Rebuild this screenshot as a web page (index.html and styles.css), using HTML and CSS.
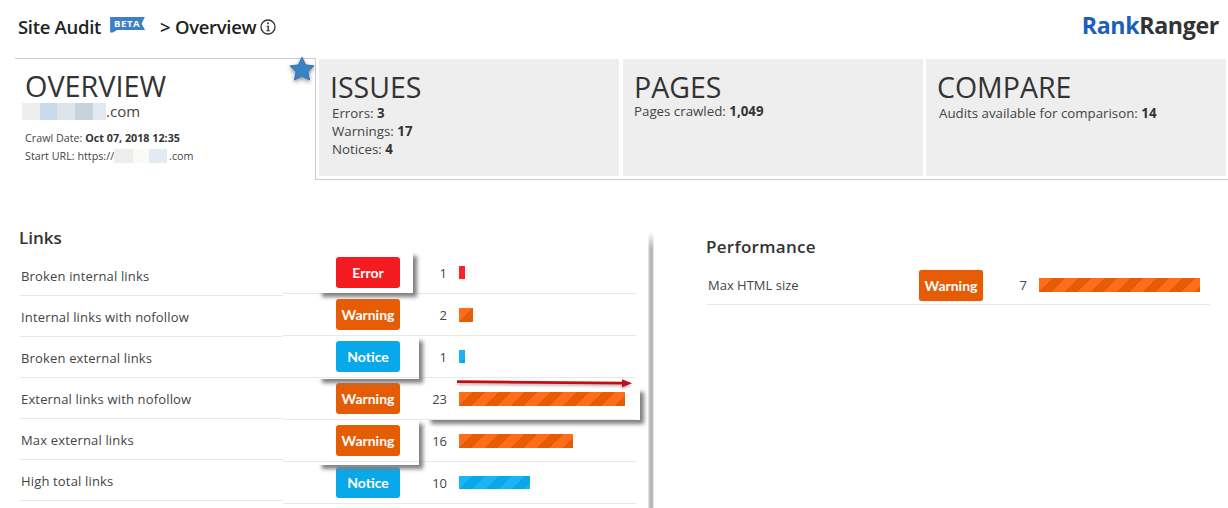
FILE: index.html
```html
<!DOCTYPE html>
<html lang="en">
<head>
<meta charset="utf-8">
<title>Site Audit Overview</title>
<link rel="stylesheet" href="styles.css">
</head>
<body>
<div class="page">
  <header class="top">
    <div class="crumb">
      <span class="crumb-main">Site Audit</span>
      <span class="beta">BETA</span>
      <span class="crumb-sub">&gt; Overview</span>
      <svg class="info" viewBox="0 0 16 16" width="16" height="16"><circle cx="8" cy="8" r="7" fill="none" stroke="#333" stroke-width="1.3"/><rect x="7.2" y="3.4" width="1.7" height="1.8" fill="#333"/><path d="M6.5 6.7h2.4v4.6h1v1H6.4v-1h1.1V7.7h-1z" fill="#333"/></svg>
    </div>
    <div class="logo"><span class="logo-blue">Rank</span>Ranger</div>
  </header>

  <section class="summary">
    <div class="tab">
      <svg class="star" viewBox="0 0 26 26" width="26" height="26"><path d="M13 1.2l3.6 7.7 8.4 1-6.2 5.7 1.7 8.3L13 20l-7.5 3.9 1.7-8.3L1 9.9l8.4-1z" fill="#3b82c4" stroke="#3674b0" stroke-width="1"/></svg>
      <h1 class="tab-title">OVERVIEW</h1>
      <div class="domain"><span class="blur blur-a"></span><span class="blur blur-b"></span><span class="blur blur-c"></span><span class="blur blur-d"></span><span class="blur blur-e"></span>.com</div>
      <p class="meta meta-date">Crawl Date: <b>Oct 07, 2018 12:35</b></p>
      <p class="meta">Start URL: https://<span class="blur blur-f"></span><span class="blur blur-g"></span><span class="blur blur-h"></span>.com</p>
    </div>
    <div class="cards">
      <div class="card">
        <h2 class="card-title">ISSUES</h2>
        <p class="stat">Errors: <b>3</b></p>
        <p class="stat">Warnings: <b>17</b></p>
        <p class="stat">Notices: <b>4</b></p>
      </div>
      <div class="card card-pages">
        <h2 class="card-title">PAGES</h2>
        <p class="stat">Pages crawled: <b>1,049</b></p>
      </div>
      <div class="card card-compare">
        <h2 class="card-title">COMPARE</h2>
        <p class="stat">Audits available for comparison: <b>14</b></p>
      </div>
    </div>
  </section>

  <main class="panels">
    <section class="links">
      <div class="link-labels">
        <h3 class="section-title">Links</h3>
        <div class="label-row">Broken internal links</div>
        <div class="label-row">Internal links with nofollow</div>
        <div class="label-row">Broken external links</div>
        <div class="label-row">External links with nofollow</div>
        <div class="label-row">Max external links</div>
        <div class="label-row">High total links</div>
      </div>
      <div class="link-values">
        <div class="value-row"><span class="badge error">Error</span><span class="count">1</span><span class="bar bar-error" style="width:6px"></span></div>
        <div class="value-row"><span class="badge warning">Warning</span><span class="count">2</span><span class="bar bar-warning" style="width:14px"></span></div>
        <div class="value-row"><span class="badge notice">Notice</span><span class="count">1</span><span class="bar bar-notice" style="width:6px"></span></div>
        <div class="value-row"><span class="badge warning">Warning</span><span class="count">23</span><span class="bar bar-warning" style="width:166px"></span></div>
        <div class="value-row"><span class="badge warning">Warning</span><span class="count">16</span><span class="bar bar-warning" style="width:114px"></span></div>
        <div class="value-row"><span class="badge notice">Notice</span><span class="count">10</span><span class="bar bar-notice" style="width:71px"></span></div>
      </div>
      <div class="mark mark-error"></div>
      <div class="mark mark-notice"></div>
      <div class="mark mark-max"></div>
      <div class="mark mark-bar"></div>
      <svg class="arrow" viewBox="0 0 176 10" width="176" height="10"><path d="M0 1.2 L165 2.8 L165 0.2 L175 4.2 L165 8.2 L165 5.6 L0 4z" fill="#c40d14"/></svg>
    </section>

    <section class="performance">
      <h3 class="section-title">Performance</h3>
      <div class="perf-row">
        <span class="perf-label">Max HTML size</span>
        <span class="badge warning badge-outline">Warning</span>
        <span class="count perf-count">7</span>
        <span class="bar bar-warning" style="width:161px"></span>
      </div>
    </section>
  </main>
</div>
</body>
</html>
```

FILE: styles.css
```css
* { box-sizing: border-box; }
html, body { margin: 0; padding: 0; background: #fff; }
.page {
  width: 1228px;
  height: 508px;
  overflow: hidden;
  font-family: "Open Sans", "Liberation Sans", sans-serif;
  color: #333;
}
p, h1, h2, h3 { margin: 0; font-weight: 400; }

/* header */
.top {
  height: 58px;
  display: flex;
  align-items: flex-start;
  justify-content: space-between;
  padding: 13px 9px 0 18px;
}
.crumb { display: flex; align-items: center; height: 27px; color: #222; }
.crumb-main { font-size: 18.5px; font-weight: 600; letter-spacing: -0.3px; }
.crumb-sub { font-size: 18.5px; font-weight: 600; letter-spacing: -0.3px; margin-left: 15px; }
.beta {
  width: 35px;
  height: 16px;
  margin: -4px 0 0 9px;
  background: #3f7fc6;
  color: #fff;
  font-size: 9.5px;
  font-weight: 700;
  line-height: 13px;
  letter-spacing: 0.6px;
  padding-left: 4px;
  clip-path: polygon(0 0, 100% 0, 90% 45%, 100% 85%, 20% 85%, 8% 100%, 0 100%);
}
.info { margin-left: 4px; }
.logo {
  font-size: 23.2px;
  font-weight: 700;
  letter-spacing: -0.35px;
  line-height: 26px;
  margin-top: -1px;
  color: #333;
}
.logo-blue { color: #1b60b8; }

/* summary */
.summary { display: flex; height: 122px; margin-left: 15px; }
.tab {
  position: relative;
  width: 301px;
  height: 122px;
  border-top: 1px solid #ccc;
  border-right: 1px solid #ccc;
  padding: 9px 0 0 10px;
}
.star {
  position: absolute;
  right: 0;
  top: -3px;
  filter: drop-shadow(0 2px 2px rgba(0,0,0,.45));
}
.tab-title { font-size: 28.8px; line-height: 35px; color: #333; }
.domain { display: flex; align-items: center; font-size: 15px; line-height: 17px; height: 17px; margin: 0 0 0 -3px; color: #444; }
.blur { display: inline-block; height: 17px; }
.blur-a { width: 18px; background: #eee; }
.blur-b { width: 17px; background: #c9dbea; }
.blur-c { width: 18px; background: #dde4ea; }
.blur-d { width: 18px; background: #c5d3de; }
.blur-e { width: 13px; background: #e2e8ef; }
.meta { font-size: 10.75px; line-height: 18px; color: #444; display: flex; align-items: center; white-space: pre; }
.meta b { font-weight: 700; color: #333; }
.meta-date { margin-top: 9px; }
.meta .blur { height: 14px; }
.blur-f { width: 19px; background: #eee; }
.blur-g { width: 16px; background: #fbfbf5; }
.blur-h { width: 18px; background: #e2ebf3; margin-right: 2px; }

.cards {
  display: flex;
  gap: 4px;
  width: 912px;
  height: 122px;
  padding: 1px 0 3px 3px;
  border-bottom: 1px solid #ccc;
}
.card { width: 300px; background: #eee; padding: 12px 11px 0; }
.card-title { font-size: 28.5px; line-height: 32px; margin-bottom: 1px; color: #333; }
.stat { font-size: 13.3px; line-height: 18px; padding-left: 2px; color: #444; }
.stat b { font-weight: 700; color: #333; }
.card-pages .card-title { margin-bottom: 0; }
.card-pages .stat { padding-left: 0; line-height: 16px; }
.card-compare { margin-left: -1px; }

/* panels */
.panels { display: flex; align-items: flex-start; padding: 50px 0 0 20px; }
.links {
  position: relative;
  display: flex;
  flex: none;
  width: 634px;
  height: 290px;
}
.links::after {
  content: "";
  position: absolute;
  left: 628px;
  top: 2px;
  bottom: 0;
  width: 6px;
  background: linear-gradient(90deg, #e8e8e8, #b0b0b0 45%, #b8b8b8 70%, #eee);
  -webkit-mask-image: linear-gradient(180deg, transparent, #000 16px);
  mask-image: linear-gradient(180deg, transparent, #000 16px);
}
.section-title { font-size: 17px; font-weight: 600; line-height: 22px; color: #333; }
.link-labels { width: 263px; }
.link-labels .section-title { height: 24px; margin: -3px 0 0 -1px; }
.label-row {
  height: 41px;
  display: flex;
  align-items: center;
  padding: 2px 0 0 1px;
  font-size: 13px;
  letter-spacing: 0.16px;
  color: #444;
  border-bottom: 1px solid #e8e8e8;
}
.link-labels .section-title + .label-row { height: 45px; padding-top: 6px; }
.link-values { width: 353px; padding-top: 22px; }
.value-row {
  display: flex;
  align-items: center;
  height: 42px;
  padding-left: 53px;
  border-bottom: 1px solid #e8e8e8;
}
.badge {
  flex: none;
  width: 64px;
  height: 31px;
  border-radius: 3px;
  display: flex;
  align-items: center;
  justify-content: center;
  color: #fff;
  font-family: "Lato", "Noto Sans", sans-serif;
  font-size: 14px;
  font-weight: 700;
}
.badge-outline { box-shadow: 0 0 1px #999; }
.error { background: #f31b20; }
.warning { background: #e55c05; }
.notice { background: #09a8e8; }
.count { width: 47px; flex: none; text-align: right; font-size: 13px; color: #444; }
.bar { display: block; flex: none; height: 13px; margin-left: 12px; }
.bar-error { background: #f8232b; }
.bar-warning { height: 14px; background: repeating-linear-gradient(135deg, #ff6c1a 0 9.2px, #e55c05 9.2px 18.4px); }
.bar-notice { background: repeating-linear-gradient(135deg, #1cb4f5 0 9.2px, #09a8e8 9.2px 18.4px); }

/* annotation overlays */
.mark { position: absolute; box-shadow: 4px 4px 4px #808080; pointer-events: none; }
.mark-error { left: 298px; top: 22px; width: 95px; height: 41px; }
.mark-notice { left: 298px; top: 107px; width: 101px; height: 42px; }
.mark-max { left: 298px; top: 190px; width: 101px; height: 45px; }
.mark-bar { left: 407px; top: 158px; width: 213px; height: 32px; }
.arrow { position: absolute; left: 437px; top: 149px; filter: drop-shadow(0 2px 1px rgba(0,0,0,.25)); }

.performance { margin-left: 52px; width: 504px; padding-top: 6px; }
.performance .section-title { letter-spacing: 0.3px; }
.perf-row {
  display: flex;
  align-items: center;
  height: 39px;
  margin: 8px 0 0 1px;
  border-bottom: 1px solid #e8e8e8;
}
.perf-label { width: 212px; flex: none; font-size: 13px; padding-left: 1px; color: #444; }
.perf-count { width: 44px; }
```
